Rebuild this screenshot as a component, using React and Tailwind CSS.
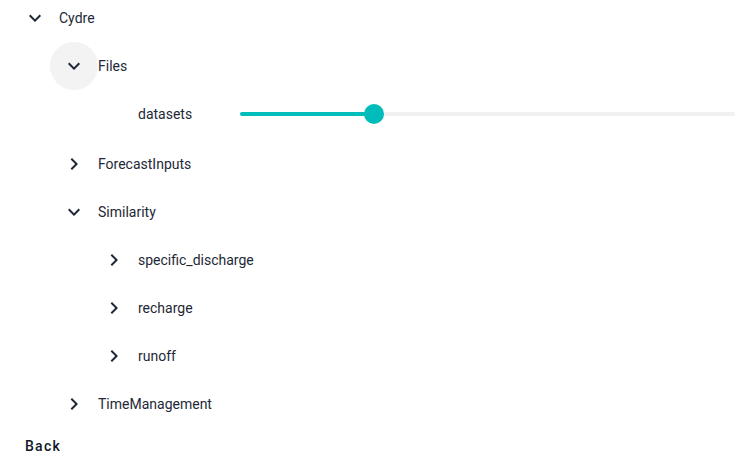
import React from 'react'

const ExpandMore = () => (
  <svg viewBox="0 0 24 24" className="w-6 h-6 fill-current">
    <path d="M16.59 8.59 12 13.17 7.41 8.59 6 10l6 6 6-6z" />
  </svg>
)

const ChevronRight = () => (
  <svg viewBox="0 0 24 24" className="w-6 h-6 fill-current">
    <path d="M10 6 8.59 7.41 13.17 12l-4.58 4.59L10 18l6-6z" />
  </svg>
)

const indents = ['pl-[11px]', 'pl-[50px]', 'pl-[90px]']

const rows = [
  { label: 'Cydre', level: 0, open: true },
  { label: 'Files', level: 1, open: true, active: true },
  { label: 'datasets', level: 2, slider: 27 },
  { label: 'ForecastInputs', level: 1, open: false },
  { label: 'Similarity', level: 1, open: true },
  { label: 'specific_discharge', level: 2, open: false },
  { label: 'recharge', level: 2, open: false },
  { label: 'runoff', level: 2, open: false },
  { label: 'TimeManagement', level: 1, open: false },
]

function Slider({ value }) {
  return (
    <div className="relative flex-1 h-5 mr-4 ml-12 flex items-center">
      <div className="absolute left-0 right-0 h-1 rounded-full bg-[#f2eff3]" />
      <div className="absolute left-0 h-1 rounded-full bg-[#00bdbb]" style={{ width: `${value}%` }} />
      <div
        className="absolute w-5 h-5 -ml-2.5 rounded-full bg-[#00bdbb]"
        style={{ left: `${value}%` }}
      />
    </div>
  )
}

export default function App() {
  return (
    <div className="w-[751px] h-[468px] bg-white overflow-hidden text-[#1e2836] font-['Roboto',sans-serif] text-[14px]">
      <div className="-mt-1.5">
        {rows.map((row, i) =>
          row.slider === undefined ? (
            <div key={i} className={`flex items-center h-12 ${indents[row.level]}`}>
              <div
                className={`w-12 h-12 shrink-0 flex items-center justify-center rounded-full ${
                  row.active ? 'bg-[#f3f3f3]' : ''
                }`}
              >
                {row.open ? <ExpandMore /> : <ChevronRight />}
              </div>
              <span>{row.label}</span>
            </div>
          ) : (
            <div key={i} className={`flex items-center h-[50px] pb-[2px] ${indents[row.level]}`}>
              <div className="w-12 h-12 shrink-0" />
              <span>{row.label}</span>
              <Slider value={row.slider} />
            </div>
          )
        )}
      </div>
      <button className="ml-[17px] h-9 px-2 font-medium tracking-[0.09em] text-[#111827]">Back</button>
    </div>
  )
}
